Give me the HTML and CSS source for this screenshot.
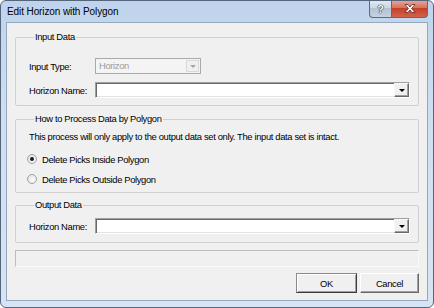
FILE: index.html
```html
<!DOCTYPE html>
<html lang="en">

<head>
    <meta charset="UTF-8">
    <title>Edit Horizon with Polygon</title>
    <link rel="stylesheet" href="styles.css">
</head>

<body>
    <div class="window">
        <div class="titlebar">
            <span class="title">Edit Horizon with Polygon</span>
            <div class="caption-btns">
                <span class="cap-btn help">?</span>
                <span class="cap-btn close">
                    <svg width="12" height="9" viewBox="0 0 12 9">
                        <path d="M1 0.5 L4 0.5 L6 3 L8 0.5 L11 0.5 L7.6 4.5 L11 8.5 L8 8.5 L6 6 L4 8.5 L1 8.5 L4.4 4.5 Z"
                            fill="#fff" stroke="#5a2a24" stroke-width="0.8" stroke-linejoin="round" />
                    </svg>
                </span>
            </div>
        </div>
        <div class="client">
            <fieldset class="group group-input">
                <legend>Input Data</legend>
                <div class="row">
                    <label>Input Type:</label>
                    <div class="combo combo-disabled">
                        <span class="combo-text">Horizon</span>
                        <span class="drop"><i class="arrow"></i></span>
                    </div>
                </div>
                <div class="row row-second">
                    <label>Horizon Name:</label>
                    <div class="combo combo-edit">
                        <span class="combo-text"></span>
                        <span class="drop"><i class="arrow"></i></span>
                    </div>
                </div>
            </fieldset>

            <fieldset class="group group-process">
                <legend>How to Process Data by Polygon</legend>
                <p class="note">This process will only apply to the output data set only. The input data set is intact.</p>
                <div class="radio-row radio-first">
                    <span class="radio checked"></span>
                    <span>Delete Picks Inside Polygon</span>
                </div>
                <div class="radio-row">
                    <span class="radio"></span>
                    <span>Delete Picks Outside Polygon</span>
                </div>
            </fieldset>

            <fieldset class="group group-output">
                <legend>Output Data</legend>
                <div class="row">
                    <label>Horizon Name:</label>
                    <div class="combo combo-edit">
                        <span class="combo-text"></span>
                        <span class="drop"><i class="arrow"></i></span>
                    </div>
                </div>
            </fieldset>

            <div class="status"></div>

            <div class="button-wrap">
                <button class="btn btn-default">OK</button>
                <button class="btn btn-cancel">Cancel</button>
            </div>
        </div>
    </div>
</body>

</html>
```

FILE: styles.css
```css
body {
    margin: 0;
    padding: 0;
    font-family: "Liberation Sans", Arial, sans-serif;
}

.window {
    box-sizing: border-box;
    width: 434px;
    height: 308px;
    border: 1px solid #55667c;
    border-radius: 6px;
    background: linear-gradient(#bfd4ec, #cfdff2 40%, #d6e4f4);
    display: flex;
    flex-direction: column;
    overflow: hidden;
}

/* title bar */
.titlebar {
    height: 21px;
    display: flex;
    align-items: flex-start;
    padding-left: 6px;
}

.title {
    font-size: 10px;
    line-height: 21px;
    color: #000;
    letter-spacing: -0.1px;
}

.caption-btns {
    margin-left: auto;
    margin-right: 5px;
    display: flex;
    margin-top: -1px;
}

.cap-btn {
    box-sizing: border-box;
    height: 18px;
    display: flex;
    align-items: center;
    justify-content: center;
    border: 1px solid #5b6b80;
    border-top: none;
}

.help {
    width: 22px;
    border-radius: 0 0 0 4px;
    border-right: none;
    background: linear-gradient(#e4ebf3, #cdd8e5 45%, #b3c2d4 50%, #c4d2e2);
    color: #f4f6f9;
    font-size: 11px;
    font-weight: bold;
    text-shadow: 0 0 1px #2d3a4a, 0 0 1px #2d3a4a, 0 0 1px #2d3a4a;
}

.close {
    width: 37px;
    border-radius: 0 0 4px 0;
    background: linear-gradient(#e9a99c, #d8735f 45%, #c3412a 50%, #d4614a);
}

/* client area */
.client {
    flex: 1;
    margin: 0 5px 6px 5px;
    border: 1px solid #97a8bd;
    background: #f0f0f0;
    padding: 8px 8px 7px 8px;
    display: flex;
    flex-direction: column;
    font-size: 9.4px;
    letter-spacing: -0.35px;
    color: #000;
}

.group {
    margin: 0;
    border: 1px solid #d0d0d0;
    border-radius: 2px;
    padding: 15px 8px 7px 13px;
}

.group legend {
    padding: 0 1px;
    margin-left: 5px;
    line-height: 12px;
}

.group-process {
    margin-top: 7px;
    padding-top: 6px;
}

.group-output {
    margin-top: 6px;
    padding-top: 7px;
    padding-bottom: 8px;
}

.row {
    display: flex;
    align-items: center;
}

.row-second {
    margin-top: 8px;
}

.row label {
    width: 66px;
    flex: none;
}

.combo {
    box-sizing: border-box;
    height: 16px;
    display: flex;
    align-items: stretch;
}

.combo-text {
    flex: 1;
    padding-left: 2px;
    line-height: 14px;
}

.combo-disabled {
    width: 106px;
    border: 1px solid #a9a9a9;
    background: #f4f4f4;
    color: #9a9a9a;
    padding: 1px;
}

.combo-disabled .combo-text {
    line-height: 12px;
}

.combo-disabled .drop {
    width: 11px;
    border: 1px solid #d9d9d9;
    background: #f0f0f0;
}

.combo-disabled .arrow {
    border-top-color: #a6a6a6;
}

.combo-edit {
    flex: 1;
    border: 1px solid;
    border-color: #a0a0a0 #fff #fff #a0a0a0;
    background: #fff;
    box-shadow: inset 1px 1px 0 #696969, inset -1px -1px 0 #e3e3e3;
}

.combo-edit .drop {
    width: 15px;
    box-sizing: border-box;
    border: 1px solid;
    border-color: #f8f8f8 #6a6a6a #6a6a6a #f8f8f8;
    box-shadow: inset -1px -1px 0 #a0a0a0;
    background: #f0f0f0;
}

.drop {
    display: flex;
    align-items: center;
    justify-content: center;
}

.arrow {
    width: 0;
    height: 0;
    border-left: 3px solid transparent;
    border-right: 3px solid transparent;
    border-top: 3px solid #000;
}

/* process group */
.note {
    margin: 0;
    line-height: 12px;
}

.radio-row {
    display: flex;
    align-items: center;
    height: 12px;
    margin-top: 8px;
}

.radio-first {
    margin-top: 10px;
}

.radio {
    box-sizing: border-box;
    width: 10px;
    height: 10px;
    margin-left: -2px;
    margin-right: 5px;
    border-radius: 50%;
    border: 1px solid #a2a2a2;
    background: radial-gradient(circle at 60% 60%, #fdfdfd, #dcdcdc);
    display: flex;
    align-items: center;
    justify-content: center;
}

.radio.checked::after {
    content: "";
    width: 4px;
    height: 4px;
    border-radius: 50%;
    background: #1a1a1a;
}

/* status and buttons */
.status {
    box-sizing: border-box;
    height: 17px;
    margin-top: 7px;
    border: 1px solid;
    border-color: #bdbdbd #fafafa #fafafa #bdbdbd;
}

.button-wrap {
    margin-top: 6px;
    display: flex;
    justify-content: flex-end;
    gap: 3px;
}

.btn {
    box-sizing: border-box;
    height: 20px;
    padding: 0;
    font-family: "Liberation Sans", Arial, sans-serif;
    font-size: 9.4px;
    letter-spacing: -0.35px;
    color: #000;
    background: #f0f0f0;
    border: 1px solid;
    border-color: #fff #696969 #696969 #fff;
    box-shadow: inset -1px -1px 0 #a0a0a0;
}

.btn-default {
    width: 61px;
    border-color: #8a8a8a #3c3c3c #3c3c3c #8a8a8a;
    box-shadow: inset 1px 1px 0 #fff, inset -1px -1px 0 #a0a0a0;
}

.btn-cancel {
    width: 59px;
}
```
